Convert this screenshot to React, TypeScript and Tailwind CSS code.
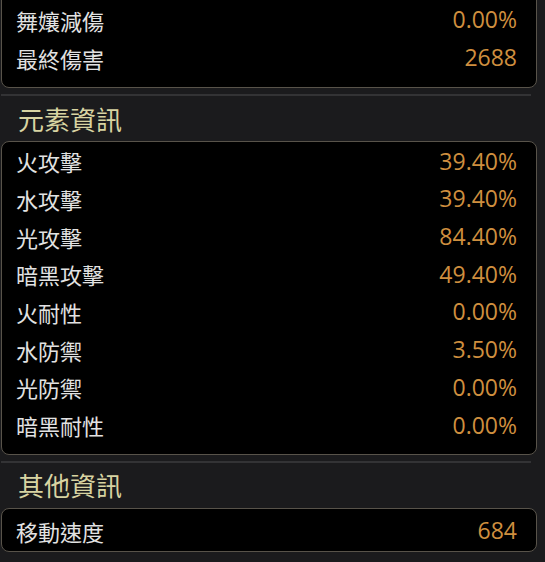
const cjk = "font-['Noto_Sans_CJK_TC','Noto_Sans',sans-serif]";

type Stat = { label: string; value: string };

const combat: Stat[] = [
  { label: "舞孃減傷", value: "0.00%" },
  { label: "最終傷害", value: "2688" },
];

const element: Stat[] = [
  { label: "火攻擊", value: "39.40%" },
  { label: "水攻擊", value: "39.40%" },
  { label: "光攻擊", value: "84.40%" },
  { label: "暗黑攻擊", value: "49.40%" },
  { label: "火耐性", value: "0.00%" },
  { label: "水防禦", value: "3.50%" },
  { label: "光防禦", value: "0.00%" },
  { label: "暗黑耐性", value: "0.00%" },
];

const other: Stat[] = [{ label: "移動速度", value: "684" }];

function Row({ stat }: { stat: Stat }) {
  return (
    <div className="flex h-[37.7px] items-center justify-between pl-[14px] pr-[19px]">
      <span className="text-[22px] leading-none text-[#e2e2e2]">{stat.label}</span>
      <span className="font-['Open_Sans',sans-serif] text-[23px] leading-none text-[#cf8f3f]">
        {stat.value}
      </span>
    </div>
  );
}

function Heading({ children }: { children: string }) {
  return (
    <div className="flex h-[45px] items-center pl-[17px]">
      <h2 className="text-[26px] leading-none text-[#d8d4a2]">{children}</h2>
    </div>
  );
}

function Divider() {
  return <div className="mr-[6px] mt-[6px] h-[2px] bg-[#333335]" />;
}

export default function App() {
  return (
    <div className={`h-[562px] w-[545px] overflow-hidden bg-[#1b1b1d] ${cjk}`}>
      <div className="mr-[8px] pl-[1px]">
        <section className="-mt-[20px] rounded-[8px] border border-[#58534a] bg-black pb-[11px] pt-[20px]">
          {combat.map((s) => (
            <Row key={s.label} stat={s} />
          ))}
        </section>
        <Divider />
        <Heading>元素資訊</Heading>
        <section className="rounded-[8px] border border-[#58534a] bg-black pb-[10px]">
          {element.map((s) => (
            <Row key={s.label} stat={s} />
          ))}
        </section>
        <Divider />
        <Heading>其他資訊</Heading>
        <section className="rounded-[8px] border border-[#58534a] bg-black pt-[3px] pb-[1px]">
          {other.map((s) => (
            <Row key={s.label} stat={s} />
          ))}
        </section>
      </div>
    </div>
  );
}
